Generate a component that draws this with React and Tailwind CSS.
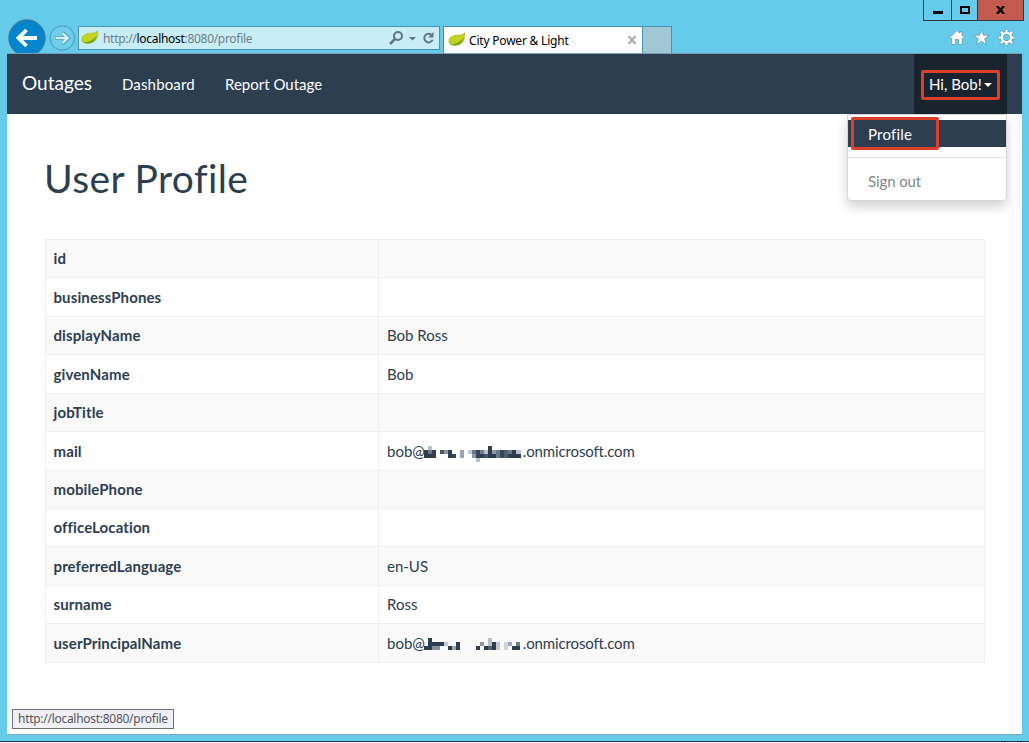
const rows = [
  { name: 'id', value: '' },
  { name: 'businessPhones', value: '' },
  { name: 'displayName', value: 'Bob Ross' },
  { name: 'givenName', value: 'Bob' },
  { name: 'jobTitle', value: '' },
  { name: 'mail', mosaic: 0 },
  { name: 'mobilePhone', value: '' },
  { name: 'officeLocation', value: '' },
  { name: 'preferredLanguage', value: 'en-US' },
  { name: 'surname', value: 'Ross' },
  { name: 'userPrincipalName', mosaic: 1 },
];

// Each block: x, y, width, height, colour.
const mosaics = [
  [
    [0, 4, 4, 8, '#2c3e50'], [4, 0, 4, 4, '#b9c0c9'], [4, 4, 4, 4, '#6b7783'], [4, 8, 4, 4, '#2c3e50'], [8, 4, 4, 8, '#2c3e50'],
    [16, 4, 4, 4, '#4a5968'], [20, 4, 4, 4, '#8f99a4'], [24, 4, 4, 8, '#2c3e50'], [28, 8, 4, 4, '#34465a'],
    [36, 4, 4, 8, '#9ba6b2'], [44, 4, 4, 4, '#c3c9d0'], [48, 4, 4, 4, '#6b7783'], [48, 8, 4, 4, '#8c97a3'], [52, 4, 4, 8, '#33455a'],
    [52, 12, 4, 4, '#b9c0c9'], [56, 4, 4, 4, '#73808c'], [56, 8, 4, 4, '#2c3e50'], [60, 4, 4, 4, '#b9c0c9'], [60, 8, 4, 4, '#4a5968'],
    [64, 0, 4, 12, '#2c3e50'], [68, 8, 4, 4, '#2c3e50'], [68, 4, 4, 4, '#8c97a3'], [72, 4, 4, 8, '#6b7783'], [76, 4, 4, 8, '#34465a'], [80, 4, 4, 8, '#4f5e6d'],
    [84, 4, 4, 4, '#6b7783'], [84, 8, 4, 4, '#2c3e50'], [88, 4, 4, 8, '#2c3e50'], [92, 4, 5, 4, '#b9c0c9'], [92, 8, 5, 4, '#2c3e50'],
  ],
  [
    [0, 8, 4, 4, '#2c3e50'], [4, 0, 4, 12, '#2c3e50'], [8, 4, 12, 4, '#2c3e50'], [8, 8, 8, 4, '#8490a0'], [20, 4, 4, 4, '#c3c9d0'],
    [24, 8, 4, 4, '#2c3e50'], [28, 8, 4, 4, '#9ba6b2'], [32, 4, 4, 8, '#2c3e50'], [52, 8, 4, 4, '#2c3e50'], [56, 4, 4, 4, '#8c97a3'],
    [60, 8, 4, 4, '#2c3e50'], [64, 0, 4, 8, '#b9c0c9'], [64, 8, 4, 4, '#53616f'], [68, 4, 4, 8, '#2c3e50'], [72, 4, 4, 8, '#c3c9d0'],
    [80, 4, 4, 8, '#d0d5da'], [84, 4, 4, 4, '#9ba6b2'], [88, 8, 4, 4, '#2c3e50'], [92, 4, 4, 4, '#73808c'], [92, 8, 4, 4, '#2c3e50'],
  ],
];

function Leaf() {
  return (
    <svg className="h-4 w-[18px] shrink-0" viewBox="0 0 18 16">
      <path d="M1 11C0 5 5 3 10 3.2C13 3.2 15 2.5 16.5 .7C17.7 7 15 12.7 8 13.2C4.7 13.4 2 12.7 1 11Z" fill="#c3d21f" stroke="#a3b72b" strokeWidth=".6" />
      <path d="M2 12C7 12.5 12 10.5 15.8 5.5C14.8 10.5 12 13.2 7.5 13.4C5 13.5 3 13 2 12Z" fill="#72a91e" />
    </svg>
  );
}

function Redacted({ index }) {
  return (
    <svg className="mt-[5px] mr-[1px] -mb-px -ml-[1px] h-4 w-[98px] shrink-0" viewBox="0 0 98 16" shapeRendering="crispEdges">
      {mosaics[index].map(([x, y, w, h, c], i) => <rect key={i} x={x} y={y} width={w} height={h} fill={c} />)}
    </svg>
  );
}

function BrowserHeader() {
  return (
    <header className="flex h-[53px] shrink-0 flex-col overflow-hidden font-['Noto_Sans',sans-serif] text-[12px]">
      <div className="flex h-[21px] shrink-0 justify-end pr-[5px]">
        <div className="flex border-x border-b border-[#2d3a40]">
          <div className="flex w-[28px] justify-center border-r border-[#2d3a40] pt-[11px]"><span className="h-[3px] w-[10px] bg-black" /></div>
          <div className="flex w-[26px] justify-center border-r border-[#2d3a40] pt-[6px]"><span className="h-2 w-[10px] border-2 border-black" /></div>
          <div className="flex w-[45px] justify-center bg-[#c25a50] pt-[6px]">
            <svg className="h-2 w-[9px]" viewBox="0 0 9 8"><path d="M1 0L8 8M8 0L1 8" stroke="#000" strokeWidth="2.2" /></svg>
          </div>
        </div>
      </div>
      <div className="flex h-8 shrink-0 items-start pl-2">
        <svg className="-mt-[2px] h-[34px] w-[38px] shrink-0" viewBox="0 0 38 34">
          <circle cx="19" cy="19" r="18.2" fill="#0384cb" stroke="#45778f" />
          <path d="M29 19H11M18.5 11L10.5 19L18.5 27" fill="none" stroke="#fff" strokeWidth="3.8" />
        </svg>
        <svg className="ml-[3px] mt-1 h-[27px] w-[27px] shrink-0" viewBox="0 0 27 27">
          <circle cx="13.2" cy="13" r="12.2" fill="#70cdec" stroke="#4796b5" />
          <path d="M6 13H18M13.5 7.5L19 13L13.5 18.5" fill="none" stroke="#4796b5" strokeWidth="3.8" />
          <path d="M6.5 13H18M13.5 8L18.7 13L13.5 18" fill="none" stroke="#d6f1fa" strokeWidth="2.4" />
        </svg>
        <div className="ml-[2px] mt-[5px] flex h-6 w-[362px] shrink-0 items-center border border-[#4494b2] bg-[#c9edf7] pl-[2px]">
          <Leaf />
          <div className="ml-1 w-[286px] pt-[2px] whitespace-nowrap tracking-[-0.3px] text-[#6b7f87]">http://<span className="text-black">localhost</span>:8080/profile</div>
          <svg className="h-4 w-12 shrink-0" viewBox="0 0 48 16">
            <g fill="none" stroke="#60777f" strokeWidth="2"><circle cx="9" cy="6" r="4" /><path d="M6 9L1 14" strokeWidth="2.5" /><path d="M42.5 4.9A4.3 4.3 0 1 0 43.6 9.7" /></g>
            <path d="M20 7H27L23.5 10.5ZM44.5 2V7.5H39Z" fill="#60777f" />
          </svg>
        </div>
        <div className="ml-[3px] mt-[5px] flex h-[27px] w-[200px] shrink-0 items-center border border-b-0 border-[#4494b2] bg-white pl-1">
          <Leaf />
          <span className="ml-[3px] w-[159px] pt-[2px] whitespace-nowrap tracking-[-0.2px] text-black">City Power &amp; Light</span>
          <svg className="h-2 w-2 shrink-0" viewBox="0 0 8 8"><path d="M.5 0L7.5 8M7.5 0L.5 8" stroke="#aaa" strokeWidth="2" /></svg>
        </div>
        <div className="mt-[5px] h-[27px] w-[29px] shrink-0 border-t border-r border-[#4494b2] bg-[#a1c7d5]" />
        <div className="ml-auto mt-2 mr-[14px] flex gap-2">
          <svg className="h-[17px] w-4" viewBox="0 0 16 17"><path d="M8 1.5L11 4.3V2.5H13V6.3L15.2 8.5L14 9.8L13.3 9.2V15.5H9.5V10.5H6.5V15.5H2.7V9.2L2 9.8L.8 8.5Z" fill="#fffaf4" stroke="#5d9cb2" strokeWidth=".8" /></svg>
          <svg className="h-[17px] w-[17px]" viewBox="0 0 17 17"><path d="M8.5 .5L10.5 6.2H16.5L11.7 9.8L13.6 15.8L8.5 12.2L3.4 15.8L5.3 9.8L.5 6.2H6.5Z" fill="#fffaf4" stroke="#5d9cb2" strokeWidth=".8" /></svg>
          <svg className="h-[17px] w-[17px]" viewBox="0 0 17 17">
            <g stroke="#5d9cb2"><circle cx="8.5" cy="8.5" r="4.6" strokeWidth="3.6" fill="none" /><path d="M8.5 .2V3M8.5 14V16.8M.2 8.5H3M14 8.5H16.8M2.4 2.4L5 5M12 12L14.6 14.6M2.4 14.6L5 12M12 5L14.6 2.4" strokeWidth="3.4" /></g>
            <g stroke="#fffaf4"><circle cx="8.5" cy="8.5" r="4.6" strokeWidth="2.4" fill="none" /><path d="M8.5 .7V4M8.5 13V16.3M.7 8.5H4M13 8.5H16.3M2.8 2.8L5 5M12 12L14.2 14.2M2.8 14.2L5 12M12 5L14.2 2.8" strokeWidth="2.2" /></g>
          </svg>
        </div>
      </div>
    </header>
  );
}

function UserMenu() {
  return (
    <div className="absolute top-full right-0 z-10 h-[87px] w-40 rounded-b border border-[#d6d6d6] bg-white pt-[5px] shadow-[0_6px_12px_rgba(0,0,0,0.175)]">
      <div className="relative flex h-[27px] items-center bg-[#2c3e50] pt-[2px] pl-5 tracking-[0.2px] text-white">
        Profile
        <span className="absolute -top-[3px] left-[3px] h-[33px] w-[88px] rounded-[2px] border-3 border-[#dc3f28]" />
      </div>
      <div className="mt-[10px] h-px bg-[#e1e1e1]" />
      <div className="mt-[10px] flex h-[27px] items-center pl-5 tracking-[-0.1px] text-[#7b8a8b]">Sign out</div>
    </div>
  );
}

export default function App() {
  return (
    <div className="flex h-[743px] w-[1029px] flex-col overflow-hidden bg-[#66caea]">
      <BrowserHeader />
      <div className="mx-[7px] flex h-[682px] w-[1015px] shrink-0 flex-col border-y border-t-[#7ba0b5] border-b-[#78a9be] bg-white font-[Lato,sans-serif] text-[15px] leading-[21.43px] text-[#2c3e50] [font-variant-ligatures:none]">
        <nav className="flex h-[60px] shrink-0 items-center bg-[#2c3e50] pl-[15px] text-white">
          <span className="w-[100px] pb-[2px] text-[19px]">Outages</span>
          <span className="w-[103px] pt-[2px] tracking-[0.15px]">Dashboard</span>
          <span className="pt-[2px]">Report Outage</span>
          <div className="relative mr-[15px] ml-auto flex h-full w-[93px] items-center bg-[#1a242f] pl-[7px]">
            <div className="mt-[1px] flex h-[30px] w-[79px] items-center rounded-[2px] border-3 border-[#dc3f28] pl-[5px] whitespace-nowrap">
              Hi, Bob!
              <svg className="ml-[2px] h-1 w-2 shrink-0" viewBox="0 0 8 4"><path d="M0 0H8L4 4Z" fill="#fff" /></svg>
            </div>
            <UserMenu />
          </div>
        </nav>
        <main className="px-[38px] pt-[43px]">
          <h1 className="-ml-px text-[39px] leading-[43px] tracking-[0.4px]">User Profile</h1>
          <table className="mt-[39px] w-[940px] table-fixed border-collapse border border-[#ecf0f1]">
            <colgroup><col className="w-[333px]" /><col /></colgroup>
            <tbody>
              {rows.map((row) => (
                <tr key={row.name} className="h-[38.43px] odd:bg-[#f9f9f9]">
                  <th className="border border-[#ecf0f1] pt-[1px] pr-2 pb-0 pl-[7.5px] text-left font-bold tracking-[0.11px]">{row.name}</th>
                  <td className="border border-[#ecf0f1] px-2 pt-[1px] pb-0">
                    {row.mosaic === undefined ? row.value : (
                      <div className="flex h-[21.43px] items-center"><span>bob@</span><Redacted index={row.mosaic} /><span className="tracking-[-0.14px]">.onmicrosoft.com</span></div>
                    )}
                  </td>
                </tr>
              ))}
            </tbody>
          </table>
        </main>
        <div className="mt-auto mb-[5px] ml-[5px] flex h-5 w-[162px] items-center border border-[#6d6d73] bg-[#f0f0f7] pl-[5px] font-['Noto_Sans',sans-serif] text-[12px] tracking-[-0.28px] whitespace-nowrap text-[#575757]">http://localhost:8080/profile</div>
      </div>
      <div className="mt-auto h-px bg-[#243b46]" />
      <div className="flex h-px justify-end gap-[15px] bg-[#fafafa] pr-2"><span className="w-px bg-[#aaa]" /><span className="w-px bg-[#aaa]" /></div>
    </div>
  );
}
